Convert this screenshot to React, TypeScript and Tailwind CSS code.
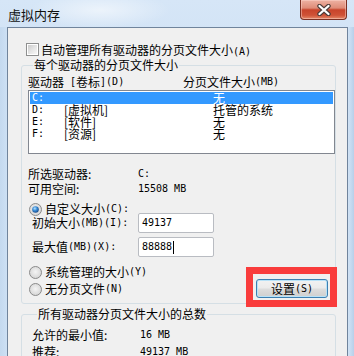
import React from "react";

function Mx({ t }: { t: string }) {
  const parts = t.split(/([\x20-\x7e]+)/);
  return (
    <>
      {parts.map((p, i) =>
        /^[\x20-\x7e]+$/.test(p) ? (
          <span key={i} className="font-['DejaVu_Sans_Mono',monospace] text-[10px] leading-none whitespace-pre">
            {p}
          </span>
        ) : (
          <span key={i}>{p}</span>
        )
      )}
    </>
  );
}

function Radio({ on }: { on?: boolean }) {
  return (
    <svg width="13" height="13" viewBox="0 0 13 13" className="shrink-0">
      <defs>
        <radialGradient id="rg" cx="50%" cy="45%" r="60%">
          <stop offset="0%" stopColor="#f4f4f4" />
          <stop offset="100%" stopColor="#d2d2d2" />
        </radialGradient>
        <radialGradient id="rb" cx="40%" cy="35%" r="70%">
          <stop offset="0%" stopColor="#b9e4ff" />
          <stop offset="45%" stopColor="#3c8ed8" />
          <stop offset="100%" stopColor="#12417f" />
        </radialGradient>
      </defs>
      <circle cx="6.5" cy="6.5" r="6" fill="url(#rg)" stroke="#8a8a8a" strokeWidth="1" />
      {on && <circle cx="6.5" cy="6.5" r="3.3" fill="url(#rb)" />}
    </svg>
  );
}

function Legend({ t }: { t: string }) {
  return <legend className="ml-[5px] px-[1px] h-[14px] leading-[14px]">{t}</legend>;
}

const rows = [
  { d: "C:", l: "", s: "无", sel: true },
  { d: "D:", l: "[虚拟机]", s: "托管的系统" },
  { d: "E:", l: "[软件]", s: "无" },
  { d: "F:", l: "[资源]", s: "无" },
];

export default function App() {
  return (
    <div className="w-[354px] h-[356px] overflow-hidden flex flex-col bg-[linear-gradient(180deg,#d6e6f7_0%,#c8dcf2_40%,#c2d7ee_100%)] font-['Noto_Sans_CJK_SC',sans-serif] text-[12px] text-black">
      {/* title bar */}
      <div className="h-[27px] flex items-start shrink-0 bg-[radial-gradient(ellipse_70px_18px_at_100px_10px,rgba(255,255,255,0.55),rgba(255,255,255,0))]">
        <div className="ml-[8px] mt-[7px] h-[16px] leading-[16px] text-[13px] text-[#111]">虚拟内存</div>
        <div className="ml-auto mr-[7px] w-[47px] h-[20px] rounded-b-[4px] border border-t-0 border-[#7a3024] bg-[linear-gradient(180deg,#eeb2a3_0%,#df8c78_42%,#c8442b_52%,#cf5237_80%,#e58a6a_100%)] flex items-center justify-center shadow-[inset_0_0_0_1px_rgba(255,220,210,0.45)]">
          <svg width="14" height="12" viewBox="0 0 14 12">
            <path d="M2.5 2 L11.5 10 M11.5 2 L2.5 10" stroke="#4b3b38" strokeWidth="4.4" strokeLinecap="round" />
            <path d="M2.5 2 L11.5 10 M11.5 2 L2.5 10" stroke="#ffffff" strokeWidth="2.3" strokeLinecap="round" />
          </svg>
        </div>
      </div>

      {/* body */}
      <div className="flex flex-1">
        <div className="w-[7px] bg-[linear-gradient(90deg,#c4d9ef,#cde0f4)]" />
        <div className="w-[341px] bg-[#f0f0f0] border-l border-t border-r border-[#70849c]">
          {/* checkbox */}
          <div className="mt-[15px] h-[13px] flex items-center pl-[18px] gap-[2px]">
            <div className="w-[13px] h-[13px] border border-[#8e8f8f] bg-white p-[1px] shrink-0">
              <div className="w-full h-full bg-[linear-gradient(135deg,#cbcbcb_0%,#e6e6e6_55%,#f7f7f7_100%)]" />
            </div>
            <span className="leading-[14px]">
              <Mx t="自动管理所有驱动器的分页文件大小(A)" />
            </span>
          </div>

          {/* group 1 */}
          <fieldset className="mt-[2px] ml-[13px] w-[315px] border border-[#d5dfe5] rounded-[3px] pl-[6px] pb-[5px]">
            <Legend t="每个驱动器的分页文件大小" />
            <div className="mt-[3px] h-[14px] flex items-center">
              <div className="w-[155px] h-[14px] flex items-center">
                <Mx t="驱动器 [卷标](D)" />
              </div>
              <div className="h-[14px] flex items-center">
                <Mx t="分页文件大小(MB)" />
              </div>
            </div>
            <div className="mt-[1px] w-[307px] h-[64px] border border-[#828790] bg-white p-[1px]">
              {rows.map((r) => (
                <div
                  key={r.d}
                  className={`h-[12px] flex items-center pl-[2px] overflow-visible ${r.sel ? "bg-[#3399ff] text-white" : ""}`}
                >
                  <div className="w-[32px] h-[12px] flex items-center">
                    <Mx t={r.d} />
                  </div>
                  <div className="w-[149px] h-[12px] flex items-center">{r.l}</div>
                  <div className="h-[12px] flex items-center">{r.s}</div>
                </div>
              ))}
            </div>

            <div className="mt-[12px] h-[15px] flex items-center">
              <div className="w-[110px]">所选驱动器:</div>
              <div className="flex items-center">
                <Mx t="C:" />
              </div>
            </div>
            <div className="h-[15px] flex items-center">
              <div className="w-[110px]">可用空间:</div>
              <div className="flex items-center">
                <Mx t="15508 MB" />
              </div>
            </div>

            <div className="mt-[6px] h-[14px] flex items-center ml-[1px] gap-[3px]">
              <Radio on />
              <span className="flex items-center">
                <Mx t="自定义大小(C):" />
              </span>
            </div>

            <div className="-mt-[3px] ml-[4px] flex flex-col gap-[4px]">
              <div className="flex items-center h-[20px]">
                <div className="w-[106px] flex items-center">
                  <Mx t="初始大小(MB)(I):" />
                </div>
                <div className="w-[76px] h-[20px] border border-[#b9bcc2] rounded-[2px] bg-white pl-[3px] flex items-center">
                  <Mx t="49137" />
                </div>
              </div>
              <div className="flex items-center h-[20px]">
                <div className="w-[106px] flex items-center">
                  <Mx t="最大值(MB)(X):" />
                </div>
                <div className="w-[76px] h-[20px] border border-[#b9bcc2] rounded-[2px] bg-white pl-[3px] flex items-center">
                  <Mx t="88888" />
                  <span className="inline-block w-[1px] h-[13px] bg-black ml-[1px]" />
                </div>
              </div>
            </div>

            <div className="mt-[8px] flex items-start">
              <div className="flex flex-col">
                <div className="h-[14px] flex items-center ml-[1px] gap-[3px]">
                  <Radio />
                  <span className="flex items-center">
                    <Mx t="系统管理的大小(Y)" />
                  </span>
                </div>
                <div className="mt-[3px] h-[14px] flex items-center ml-[1px] gap-[3px]">
                  <Radio />
                  <span className="flex items-center">
                    <Mx t="无分页文件(N)" />
                  </span>
                </div>
              </div>
              <div className="ml-auto mr-[7px] mt-[14px] relative">
                <button className="w-[72px] h-[19px] rounded-[3px] border border-[#3c7fb1] bg-[linear-gradient(180deg,#f2f2f2_0%,#ebebeb_48%,#dddddd_52%,#cfcfcf_100%)] shadow-[inset_0_0_0_1px_#b8e2f8] flex items-center justify-center">
                  <Mx t="设置(S)" />
                </button>
                <div className="absolute left-[-10px] top-[-12px] right-[-9px] bottom-[-9px] border-[7px] border-[#f93c3c] pointer-events-none" />
              </div>
            </div>
          </fieldset>

          {/* group 2 */}
          <fieldset className="mt-[3px] ml-[13px] w-[315px] h-[80px] border border-[#d5dfe5] rounded-[3px] pl-[10px]">
            <Legend t="所有驱动器分页文件大小的总数" />
            <div className="mt-[7px] h-[14px] flex items-center">
              <div className="w-[108px]">允许的最小值:</div>
              <div className="flex items-center">
                <Mx t="16 MB" />
              </div>
            </div>
            <div className="mt-[3px] h-[14px] flex items-center">
              <div className="w-[108px]">推荐:</div>
              <div className="flex items-center">
                <Mx t="49137 MB" />
              </div>
            </div>
          </fieldset>
        </div>
        <div className="flex-1 bg-[linear-gradient(90deg,#d2e3f5,#b7d0ea)]" />
      </div>
    </div>
  );
}
